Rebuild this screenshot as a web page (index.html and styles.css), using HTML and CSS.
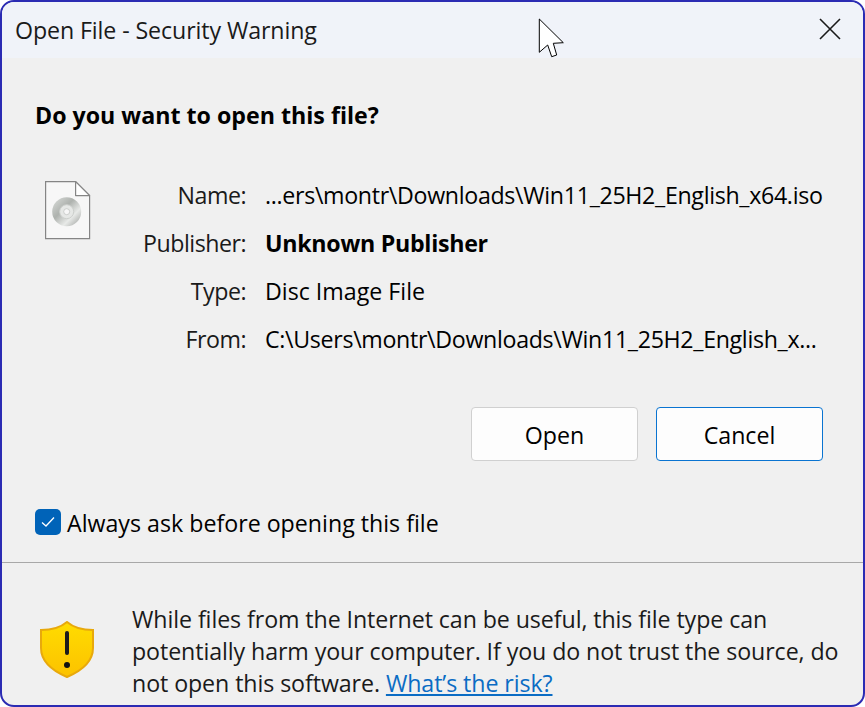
FILE: index.html
```html
<!DOCTYPE html>
<html lang="en">
<head>
<meta charset="UTF-8">
<meta name="viewport" content="width=device-width, initial-scale=1.0">
<title>Open File - Security Warning</title>
<link rel="stylesheet" href="styles.css">
</head>
<body>
    <div class="dialog">
        <!-- title bar -->
        <div class="titlebar">
            <span class="title">Open File - Security Warning</span>
            <svg class="close-icon" width="22" height="22" viewBox="0 0 22 22">
                <path d="M1 1 L21 21 M21 1 L1 21" stroke="#1a1a1a" stroke-width="1.6" fill="none"/>
            </svg>
        </div>

        <!-- mouse pointer -->
        <svg class="pointer" width="28" height="41" viewBox="0 0 28 41">
            <path d="M1.3 1 L1.3 34.3 L9.7 27 L13.7 38.7 L18.7 37 L15.3 25.3 L25.3 24.7 Z" fill="#fff" stroke="#000" stroke-width="1" stroke-linejoin="round"/>
        </svg>

        <div class="main">
            <h1 class="question">Do you want to open this file?</h1>

            <div class="details">
                <svg class="file-icon" width="46" height="59" viewBox="0 0 46 59">
                    <defs>
                        <linearGradient id="disc" x1="0" y1="0" x2="1" y2="1">
                            <stop offset="0" stop-color="#dcdfdc"/>
                            <stop offset="0.4" stop-color="#aeb2ae"/>
                            <stop offset="0.68" stop-color="#e8eae8"/>
                            <stop offset="1" stop-color="#989b98"/>
                        </linearGradient>
                    </defs>
                    <path d="M0.6 0.6 L30.6 0.6 L44.6 14.6 L44.6 57.6 L0.6 57.6 Z" fill="#f7f7f7" stroke="#858585" stroke-width="1.2"/>
                    <path d="M30.6 0.6 L30.6 14.6 L44.6 14.6 Z" fill="#fff" stroke="#858585" stroke-width="1.2" stroke-linejoin="round"/>
                    <circle cx="21.7" cy="30.7" r="14.5" fill="url(#disc)"/>
                    <circle cx="21.7" cy="30.7" r="7" fill="#e6e8e6" stroke="#cdd0cd"/>
                    <circle cx="21.7" cy="30.7" r="3" fill="#f7f7f7" stroke="#b5b8b5" stroke-width="0.6"/>
                </svg>

                <div class="info">
                    <span class="label">Name:</span>
                    <span class="value path">...ers\montr\Downloads\Win11_25H2_English_x64.iso</span>
                    <span class="label">Publisher:</span>
                    <span class="value bold">Unknown Publisher</span>
                    <span class="label">Type:</span>
                    <span class="value">Disc Image File</span>
                    <span class="label">From:</span>
                    <span class="value path">C:\Users\montr\Downloads\Win11_25H2_English_x...</span>
                </div>
            </div>

            <div class="buttons">
                <button class="btn">Open</button>
                <button class="btn btn-default">Cancel</button>
            </div>

            <div class="ask">
                <span class="checkbox">
                    <svg width="14" height="12" viewBox="0 0 14 12">
                        <path d="M1 6.5 L5 10 L13 1.5" stroke="#fff" stroke-width="1.3" fill="none"/>
                    </svg>
                </span>
                <span>Always ask before opening this file</span>
            </div>
        </div>

        <!-- warning -->
        <div class="warning">
            <svg class="shield" width="56" height="58" viewBox="0 0 56 58">
                <defs>
                    <linearGradient id="gold" x1="0" y1="0" x2="0" y2="1">
                        <stop offset="0" stop-color="#ffdc00"/>
                        <stop offset="1" stop-color="#fcc200"/>
                    </linearGradient>
                </defs>
                <path d="M28 1 C35 7 44 9 54 9 L54 27 C54 41 42 50 28 56 C14 50 2 41 2 27 L2 9 C12 9 21 7 28 1 Z" fill="url(#gold)" stroke="#e8a90c" stroke-width="2"/>
                <rect x="26" y="10" width="4" height="24" rx="2" fill="#1c1c1c"/>
                <circle cx="28" cy="44" r="3" fill="#111"/>
            </svg>
            <p class="warning-text">While files from the Internet can be useful, this file type can potentially harm your computer. If you do not trust the source, do not open this software. <a href="#" class="risk">What’s the risk?</a></p>
        </div>
    </div>
</body>
</html>
```

FILE: styles.css
```css
* {
    box-sizing: border-box;
}
html, body {
    margin: 0;
    padding: 0;
    background: #fff;
}
.dialog {
    position: relative;
    width: 865px;
    height: 707px;
    display: flex;
    flex-direction: column;
    overflow: hidden;
    border: 2px solid #2b2bb3;
    border-radius: 14px;
    background: #f0f0f0;
    color: #000;
    font-family: "Open Sans", "Noto Sans", sans-serif;
    font-size: 23.2px;
}

/* title bar */
.titlebar {
    flex: none;
    height: 56px;
    padding: 0 22px 0 13px;
    display: flex;
    align-items: center;
    justify-content: space-between;
    background: #f0f3f9;
}
.title {
    color: #1a1a1a;
    letter-spacing: -0.1px;
}
.close-icon {
    display: block;
    margin-bottom: 2px;
}
.pointer {
    position: absolute;
    left: 536px;
    top: 16px;
}

.main {
    flex: none;
    height: 505px;
    padding: 0 40px 0 33px;
    border-bottom: 1px solid #a8a8a8;
}
.question {
    margin: 39px 0 0;
    font-size: 23.2px;
    font-weight: 700;
    line-height: 36px;
}
.details {
    display: flex;
    margin-top: 38px;
}
.file-icon {
    flex: none;
    margin: 10px 2px 0 10px;
}
.info {
    display: grid;
    grid-template-columns: 153px 1fr;
    grid-auto-rows: 48px;
    column-gap: 19px;
    align-items: center;
    white-space: nowrap;
}
.label {
    text-align: right;
    color: #1a1a1a;
    letter-spacing: -0.5px;
}
.path {
    letter-spacing: -0.32px;
}
.bold {
    font-weight: 700;
    letter-spacing: -0.27px;
}

.buttons {
    display: flex;
    justify-content: flex-end;
    gap: 18px;
    margin-top: 44px;
}
.btn {
    width: 167px;
    height: 54px;
    padding-top: 2px;
    border: 1px solid #d0d0d0;
    border-radius: 4px;
    background: #fdfdfd;
    font: inherit;
    color: #000;
}
.btn-default {
    border-color: #0a74d1;
}

.ask {
    display: flex;
    align-items: center;
    gap: 6px;
    margin-top: 46px;
}
.checkbox {
    width: 26px;
    height: 26px;
    margin-bottom: 2px;
    display: flex;
    align-items: center;
    justify-content: center;
    border-radius: 5px;
    background: #0063b8;
}

/* warning */
.warning {
    flex: 1;
    display: flex;
    padding: 40px 20px 0 37px;
}
.shield {
    flex: none;
    margin-top: 18px;
}
.warning-text {
    margin: 0 0 0 37px;
    line-height: 32px;
    color: #1a1a1a;
    letter-spacing: -0.08px;
}
.risk {
    color: #0a6cc4;
}
```
